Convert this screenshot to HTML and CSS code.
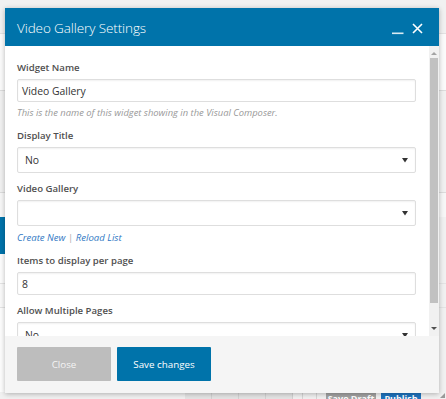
FILE: index.html
```html
<!DOCTYPE html>
<html>
<head>
<meta charset="utf-8">
<link rel="stylesheet" href="styles.css">
</head>
<body>
<div class="page">
  <div class="bg-row bg-top"></div>
  <div class="bg-row bg-band"></div>
  <div class="bg-row bg-mid"></div>
  <div class="bg-row bg-light"></div>
  <div class="bg-row bg-blue"></div>
  <div class="bg-row bg-white"></div>
  <div class="bg-row bg-stripe"></div>
  <div class="bg-row bg-low"></div>
  <div class="bg-bottom">
    <div class="bg-boxes"><span></span><span></span><span></span><span></span></div>
    <div class="bg-sep"></div>
    <div class="bg-btn draft">Save Draft</div>
    <div class="bg-btn publish">Publish</div>
  </div>

  <div class="modal">
    <div class="modal-header">
      <div class="modal-title">Video Gallery Settings</div>
      <div class="modal-tools">
        <svg class="ico-min" width="12" height="12" viewBox="0 0 12 12"><rect x="0" y="9.5" width="11.5" height="1.6" fill="#fff" opacity="0.85"/></svg>
        <svg class="ico-close" width="11" height="11" viewBox="0 0 11 11"><path d="M1 1 L10 10 M10 1 L1 10" stroke="#fff" stroke-width="1.6" fill="none"/></svg>
      </div>
    </div>
    <div class="modal-body">
      <div class="modal-content">
        <div class="field">
          <label class="lbl">Widget Name</label>
          <div class="input">Video Gallery</div>
          <div class="help">This is the name of this widget showing in the Visual Composer.</div>
        </div>
        <div class="field">
          <label class="lbl">Display Title</label>
          <div class="select"><span>No</span><svg width="6" height="5" viewBox="0 0 6 5"><path d="M0 0 L6 0 L3 4.5 Z" fill="#333"/></svg></div>
        </div>
        <div class="field">
          <label class="lbl">Video Gallery</label>
          <div class="select"><span></span><svg width="6" height="5" viewBox="0 0 6 5"><path d="M0 0 L6 0 L3 4.5 Z" fill="#333"/></svg></div>
          <div class="links"><a class="lnk">Create New</a> <span class="bar">|</span> <a class="lnk">Reload List</a></div>
        </div>
        <div class="field">
          <label class="lbl">Items to display per page</label>
          <div class="input tall">8</div>
        </div>
        <div class="field">
          <label class="lbl">Allow Multiple Pages</label>
          <div class="select"><span>No</span><svg width="6" height="5" viewBox="0 0 6 5"><path d="M0 0 L6 0 L3 4.5 Z" fill="#333"/></svg></div>
        </div>
      </div>
      <div class="scrollbar">
        <div class="sb-arrow up"></div>
        <div class="sb-track"><div class="sb-thumb"></div></div>
        <div class="sb-arrow down"></div>
      </div>
    </div>
    <div class="modal-footer">
      <div class="btn btn-close">Close</div>
      <div class="btn btn-save">Save changes</div>
    </div>
  </div>
  <div class="resize"></div>
</div>
</body>
</html>
```

FILE: styles.css
```css
* { box-sizing: border-box; }
html, body { margin: 0; padding: 0; }
body {
  width: 446px;
  height: 399px;
  overflow: hidden;
  font-family: "Open Sans", "DejaVu Sans", sans-serif;
  background: #f1f1f1;
}
.page {
  position: relative;
  width: 446px;
  height: 399px;
  overflow: hidden;
  display: flex;
  flex-direction: column;
}
.bg-row { width: 100%; flex: none; }
.bg-top { height: 33px; background: #f1f1f1; }
.bg-band { height: 57px; background: #fbfbfb; border-top: 1px solid #e2e2e2; }
.bg-mid { height: 102px; background: #f1f1f1; border-top: 1px solid #dcdcdc; }
.bg-light { height: 25px; background: #f7f7f7; border-top: 1px solid #dcdcdc; }
.bg-blue { height: 37px; background: linear-gradient(to right, #0073aa 0 60px, #f1f1f1 60px); }
.bg-white { height: 29px; background: linear-gradient(to right, #fdfdfd 0 60px, #f1f1f1 60px); }
.bg-stripe { height: 25px; background: linear-gradient(to right, #fafafa 0 60px, #f1f1f1 60px); border-top: 1px solid #e4e4e4; border-bottom: 1px solid #e4e4e4; }
.bg-low { height: 84px; background: linear-gradient(to right, #fdfdfd 0 60px, #f1f1f1 60px); }
.bg-bottom {
  flex: none;
  height: 12px;
  display: flex;
  align-items: flex-start;
  padding-left: 185px;
  background: #f1f1f1;
}
.bg-boxes { display: flex; width: 108px; height: 12px; background: #e4e4e4; }
.bg-boxes span { flex: 1; border-right: 1px solid #d2d2d2; }
.bg-sep { width: 15px; height: 12px; margin-left: 9px; border-left: 1px solid #d6d6d6; border-right: 1px solid #d6d6d6; }
.bg-btn {
  height: 14px;
  color: #fff;
  font-size: 9px;
  font-weight: 700;
  line-height: 14px;
  text-align: center;
}
.draft { width: 50px; margin-left: 9px; background: #a3a3a3; }
.publish { width: 40px; margin-left: 5px; background: #1e73be; }

.modal {
  position: absolute;
  left: 5px;
  top: 8px;
  width: 434px;
  height: 385px;
  background: #fff;
  box-shadow: 0 1px 5px rgba(0,0,0,0.28);
  display: flex;
  flex-direction: column;
}
.modal-header {
  flex: none;
  height: 38px;
  background: #0073aa;
  display: flex;
  align-items: center;
  justify-content: space-between;
  padding: 0 16px 0 12px;
}
.modal-title {
  color: #fff;
  font-size: 13.5px;
  font-weight: 300;
  letter-spacing: -0.1px;
  padding-top: 1px;
}
.modal-tools { display: flex; align-items: center; gap: 8px; padding-top: 2px; }
.ico-min { display: block; margin-top: 1px; }
.ico-close { display: block; }

.modal-body {
  flex: none;
  height: 290px;
  display: flex;
  overflow: hidden;
}
.modal-content {
  flex: 1;
  overflow: hidden;
  padding: 15px 13px 0 12px;
}
.field { margin-bottom: 9px; }
.lbl {
  display: block;
  color: #505050;
  font-size: 9.6px;
  font-weight: 600;
  line-height: 14px;
  margin-bottom: 4px;
}
.input, .select {
  height: 23px;
  border: 1px solid #dedede;
  border-radius: 2px;
  box-shadow: inset 0 1px 2px rgba(0,0,0,0.06);
  color: #333;
  font-size: 10.4px;
  display: flex;
  align-items: center;
  padding-left: 4px;
}
.select {
  height: 26px;
  padding: 0 7px 0 7px;
  justify-content: space-between;
}
.select svg { display: block; }
.help, .links {
  font-size: 9.4px;
  font-style: italic;
  line-height: 14px;
  margin-top: 4px;
  color: #999;
}
.links { margin-top: 5px; font-size: 9.6px; }
.lnk { color: #3179c4; }
.bar { color: #aaa; font-style: normal; }

.scrollbar {
  flex: none;
  width: 10px;
  background: #f1f1f1;
  display: flex;
  flex-direction: column;
  align-items: center;
}
.sb-arrow { width: 0; height: 0; border-left: 3px solid transparent; border-right: 3px solid transparent; }
.sb-arrow.up { margin-top: 6px; border-bottom: 3px solid #a3a3a3; }
.sb-arrow.down { margin-bottom: 6px; border-top: 3px solid #505050; }
.sb-track { flex: 1; width: 100%; padding: 3px 1px 0 1px; }
.sb-thumb { height: 245px; background: #c1c1c1; }

.modal-footer {
  flex: 1;
  background: #f5f5f5;
  display: flex;
  gap: 6px;
  padding: 11px 12px;
}
.btn {
  width: 94px;
  height: 34px;
  display: flex;
  align-items: center;
  justify-content: center;
  font-size: 9.8px;
  border-radius: 1px;
}
.btn-close { background: #bdbdbd; color: #f4f4f4; }
.btn-save { background: #0073aa; color: #fff; }
.resize {
  position: absolute;
  right: 1px;
  bottom: 1px;
  width: 0;
  height: 0;
  border-left: 5px solid transparent;
  border-bottom: 5px solid #999;
}
```
